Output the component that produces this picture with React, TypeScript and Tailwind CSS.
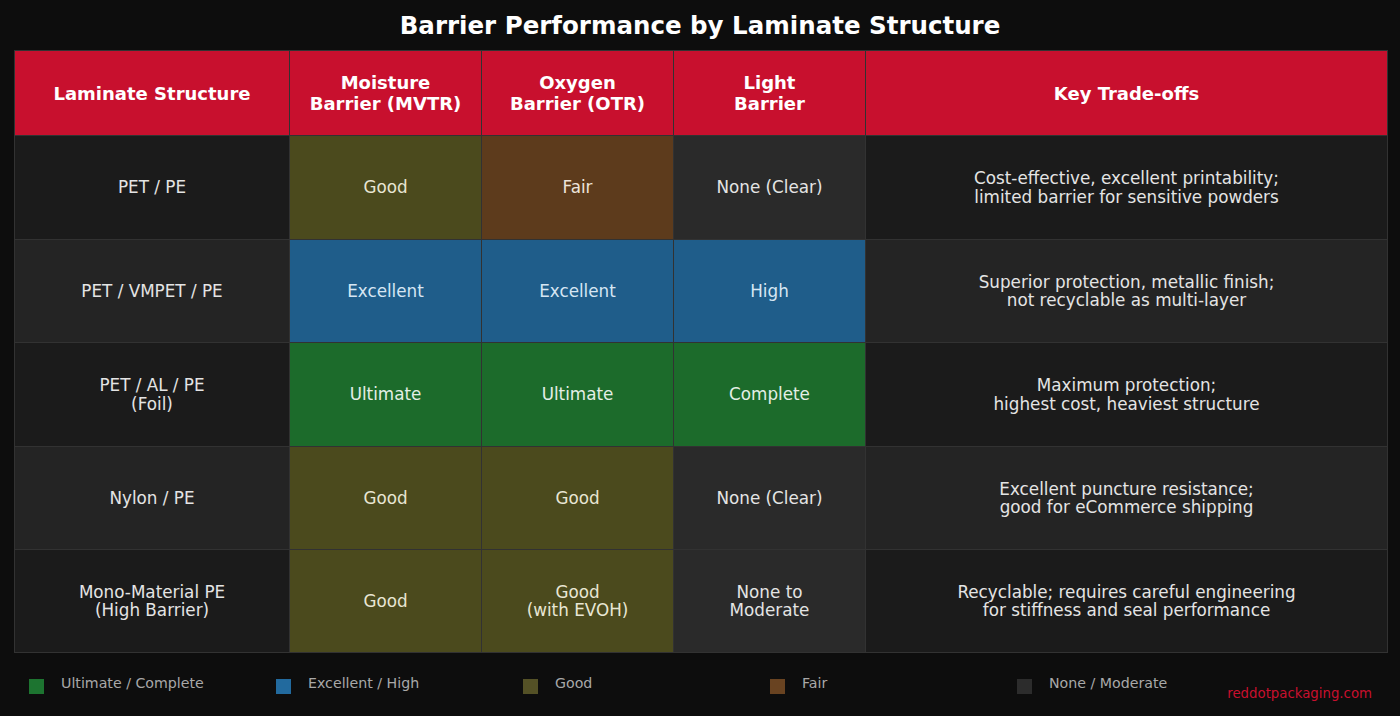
import React from "react";

type Tone = "green" | "blue" | "olive" | "brown" | "none";

const toneClass: Record<Tone, string> = {
  green: "bg-[#1c6b2b] text-[#e4efe6]",
  blue: "bg-[#1f5d8a] text-[#d6e6f3]",
  olive: "bg-[#4b4a1d] text-[#e8e6d4]",
  brown: "bg-[#5d3b1c] text-[#eee4da]",
  none: "bg-[#2a2a2a] text-[#e4e4e4]",
};

type Cell = { text: string; tone: Tone };
type Row = { name: string; cells: Cell[]; note: string; h: string; bg: string };

const rows: Row[] = [
  {
    name: "PET / PE",
    cells: [
      { text: "Good", tone: "olive" },
      { text: "Fair", tone: "brown" },
      { text: "None (Clear)", tone: "none" },
    ],
    note: "Cost-effective, excellent printability;\nlimited barrier for sensitive powders",
    h: "h-[103px]",
    bg: "bg-[#1b1b1b]",
  },
  {
    name: "PET / VMPET / PE",
    cells: [
      { text: "Excellent", tone: "blue" },
      { text: "Excellent", tone: "blue" },
      { text: "High", tone: "blue" },
    ],
    note: "Superior protection, metallic finish;\nnot recyclable as multi-layer",
    h: "h-[102px]",
    bg: "bg-[#242424]",
  },
  {
    name: "PET / AL / PE\n(Foil)",
    cells: [
      { text: "Ultimate", tone: "green" },
      { text: "Ultimate", tone: "green" },
      { text: "Complete", tone: "green" },
    ],
    note: "Maximum protection;\nhighest cost, heaviest structure",
    h: "h-[103px]",
    bg: "bg-[#1b1b1b]",
  },
  {
    name: "Nylon / PE",
    cells: [
      { text: "Good", tone: "olive" },
      { text: "Good", tone: "olive" },
      { text: "None (Clear)", tone: "none" },
    ],
    note: "Excellent puncture resistance;\ngood for eCommerce shipping",
    h: "h-[102px]",
    bg: "bg-[#242424]",
  },
  {
    name: "Mono-Material PE\n(High Barrier)",
    cells: [
      { text: "Good", tone: "olive" },
      { text: "Good\n(with EVOH)", tone: "olive" },
      { text: "None to\nModerate", tone: "none" },
    ],
    note: "Recyclable; requires careful engineering\nfor stiffness and seal performance",
    h: "h-[102px]",
    bg: "bg-[#1b1b1b]",
  },
];

const legend = [
  { label: "Ultimate / Complete", color: "bg-[#1d7430]" },
  { label: "Excellent / High", color: "bg-[#226a9e]" },
  { label: "Good", color: "bg-[#545126]" },
  { label: "Fair", color: "bg-[#694321]" },
  { label: "None / Moderate", color: "bg-[#2c2c2c]" },
];

const headers = [
  "Laminate Structure",
  "Moisture\nBarrier (MVTR)",
  "Oxygen\nBarrier (OTR)",
  "Light\nBarrier",
  "Key Trade-offs",
];

function CellText({ text, className }: { text: string; className?: string }) {
  return (
    <div
      className={`flex items-center justify-center whitespace-pre-line text-center ${className ?? ""}`}
    >
      {text}
    </div>
  );
}

export default function App() {
  return (
    <div
      className="h-[716px] w-[1400px] overflow-hidden bg-[#0d0d0d]"
      style={{ fontFamily: '"DejaVu Sans", "Liberation Sans", sans-serif' }}
    >
      <h1 className="flex h-[50px] items-center justify-center pt-[3px] text-[24.5px] font-bold text-white">
        Barrier Performance by Laminate Structure
      </h1>

      <div className="ml-[14px] grid w-[1374px] grid-cols-[274px_191px_191px_191px_521px] gap-px bg-[#323232] p-px">
        {headers.map((h) => (
          <CellText
            key={h}
            text={h}
            className="h-[84px] bg-[#c8102e] text-[18px] leading-[21px] font-bold text-white"
          />
        ))}
        {rows.map((r) => (
          <React.Fragment key={r.name}>
            <CellText
              text={r.name}
              className={`${r.h} ${r.bg} text-[16.8px] leading-[1.1] text-[#e4e4e4]`}
            />
            {r.cells.map((c, i) => (
              <CellText
                key={i}
                text={c.text}
                className={`${r.h} ${toneClass[c.tone]} text-[16.8px] leading-[1.1]`}
              />
            ))}
            <CellText
              text={r.note}
              className={`${r.h} ${r.bg} text-[16.8px] leading-[1.1] text-[#e4e4e4]`}
            />
          </React.Fragment>
        ))}
      </div>

      <div className="relative mt-[22px] flex pl-[29px]">
        {legend.map((l) => (
          <div key={l.label} className="flex w-[247px] items-start">
            <span className={`mt-[4px] h-[15px] w-[15px] ${l.color}`} />
            <span className="ml-[17px] text-[14.2px] leading-[16px] text-[#a8a8a8]">
              {l.label}
            </span>
          </div>
        ))}
        <span className="absolute right-[28px] top-[9px] text-[13.3px] text-[#c8102e]">
          reddotpackaging.com
        </span>
      </div>
    </div>
  );
}
